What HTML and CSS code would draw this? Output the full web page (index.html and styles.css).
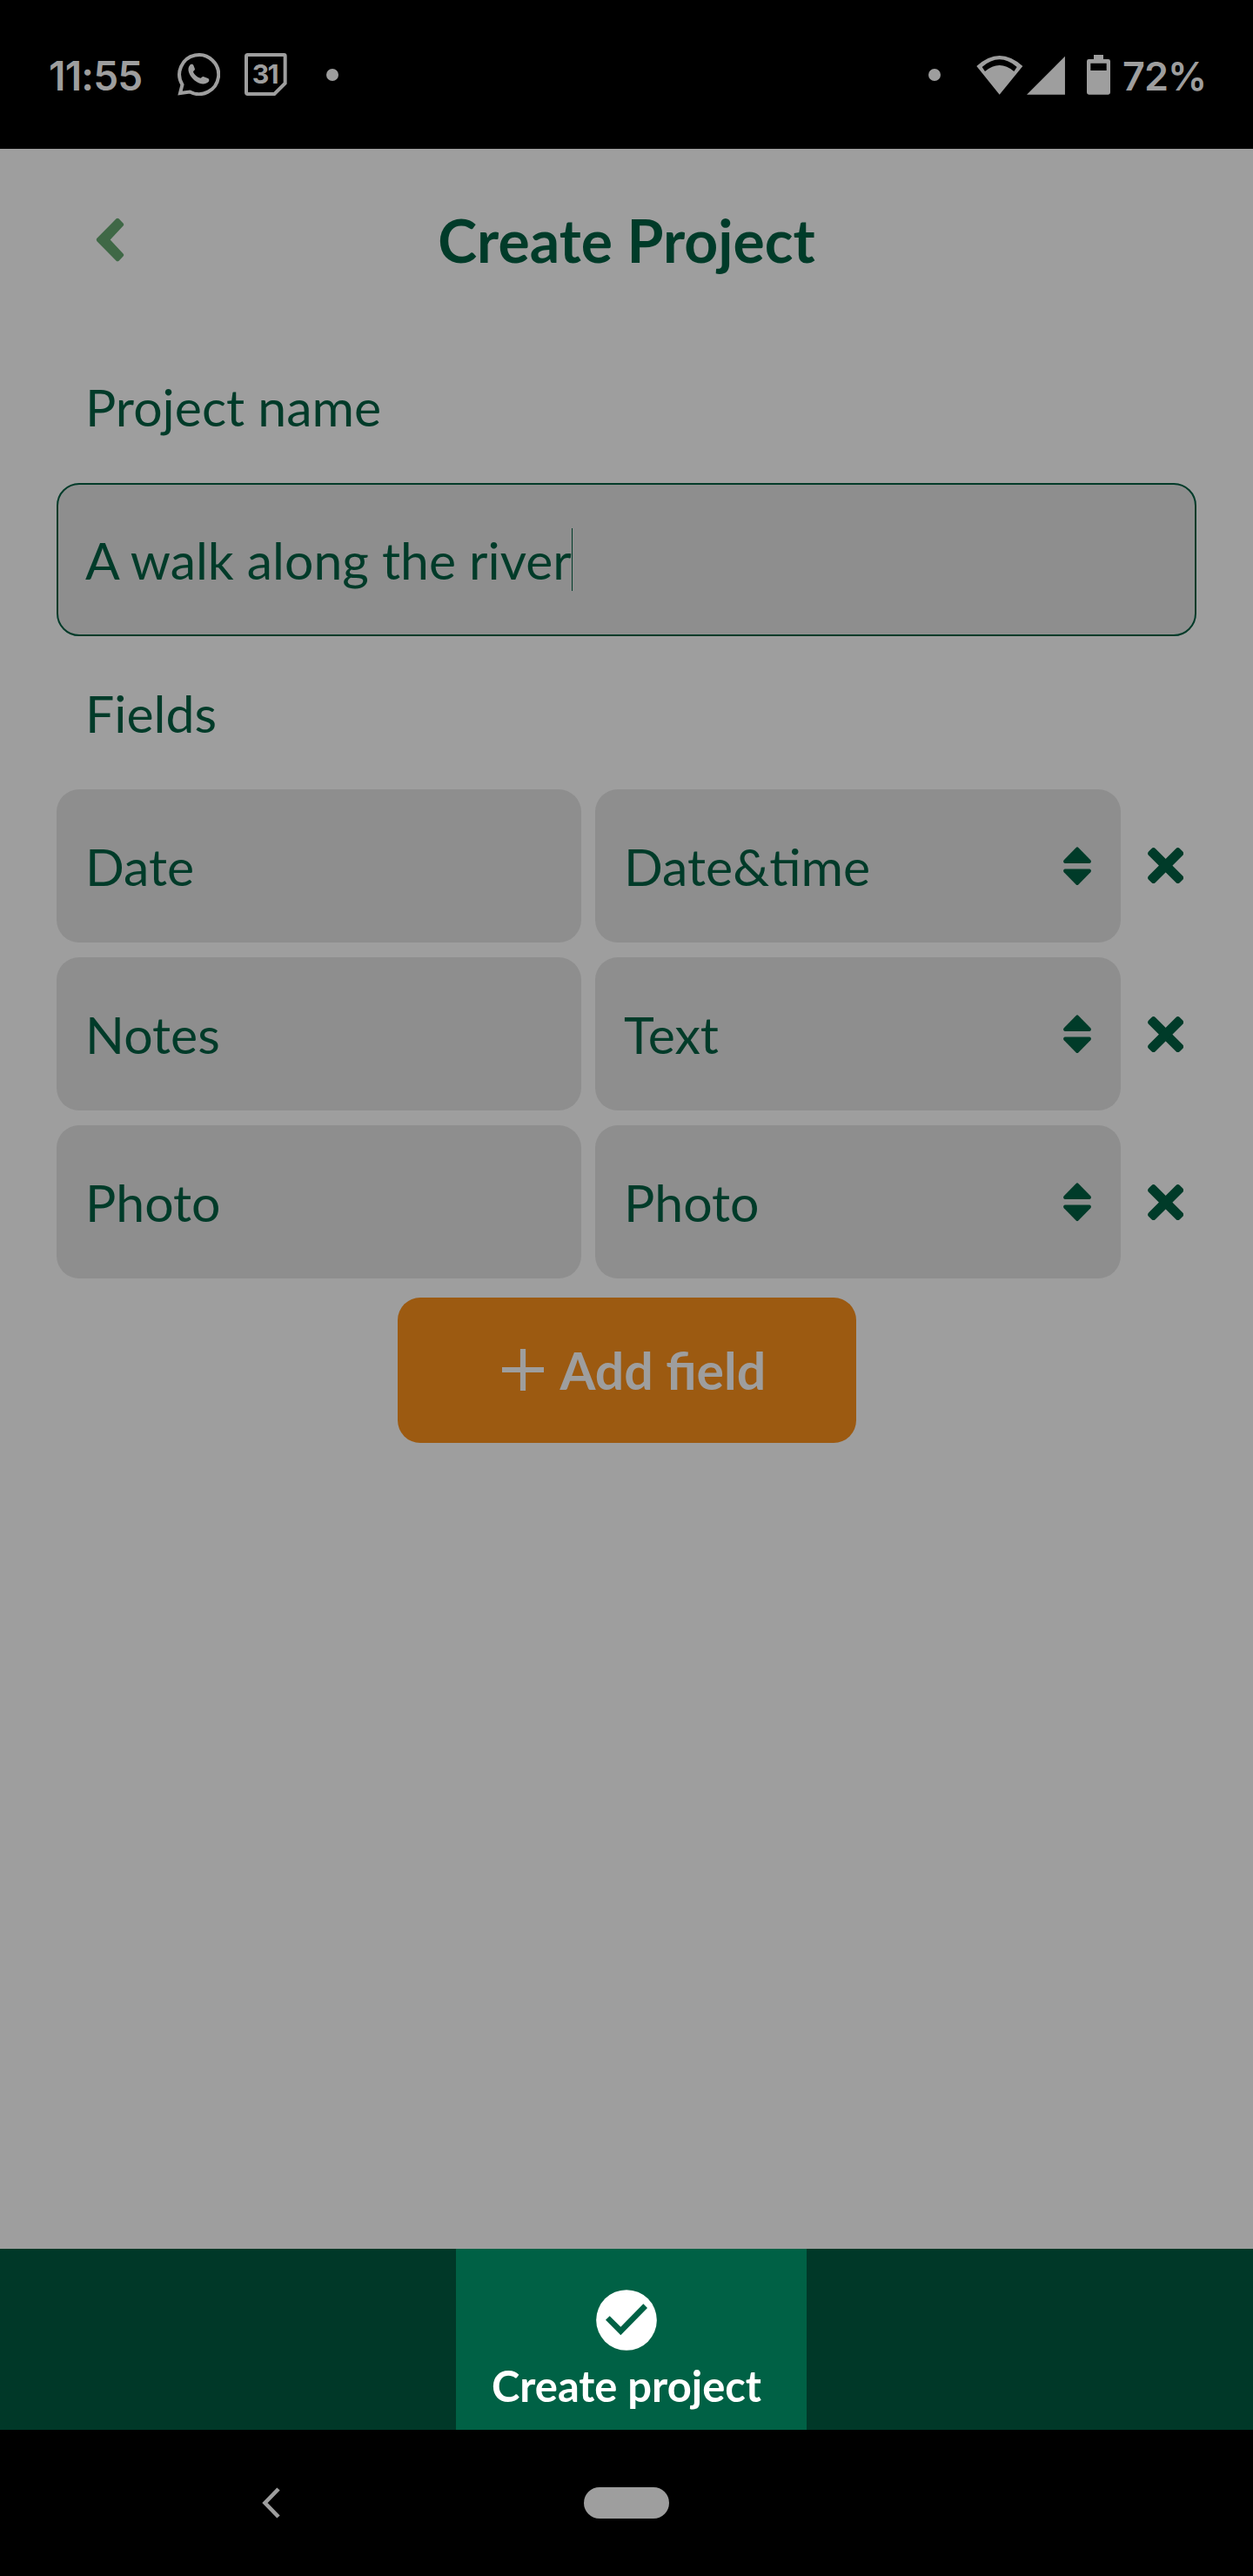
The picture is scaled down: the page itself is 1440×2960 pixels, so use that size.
FILE: index.html
```html
<!DOCTYPE html>
<html lang="en">
<head>
<meta charset="utf-8">
<title>Create Project</title>
<link rel="stylesheet" href="styles.css">
</head>
<body>
<svg class="defs" aria-hidden="true">
  <symbol id="sort" viewBox="0 0 96 134">
    <path d="M44 3Q48-1 52 3L94 46Q97 50 95 54Q93 57 90 57H6Q3 57 1 54Q-1 50 2 46Z"/>
    <path d="M44 131Q48 135 52 131L94 88Q97 84 95 80Q93 77 90 77H6Q3 77 1 80Q-1 84 2 88Z"/>
  </symbol>
  <symbol id="cross" viewBox="-62 -62 124 124">
    <rect x="-76" y="-16.5" width="152" height="33" rx="10" transform="rotate(45)"/>
    <rect x="-76" y="-16.5" width="152" height="33" rx="10" transform="rotate(-45)"/>
  </symbol>
</svg>
<div class="screen">
  <div class="status">
    <span class="time">11:55</span>
    <svg class="whatsapp" viewBox="27 33 147 147">
      <path d="M36 171L43.5 142A67.5 67.5 0 1 1 69.5 166.4Z" fill="none" stroke="currentColor" stroke-width="12"/>
      <path d="M70 74C72 71 80 70 82 75L87 88C88 92 81 95 81 98C85 107 95 116 106 119C109 119 113 113 116 114L132 120C137 122 137 128 134 132C126 140 114 141 103 137C86 131 71 115 66 99C63 89 64 80 70 74Z"/>
    </svg>
    <svg class="calendar" viewBox="259 33 147 147">
      <path d="M270 39H395Q399 39 399 43V137L362 174H270Q265 174 265 169V44Q265 39 270 39Z" fill="none" stroke="currentColor" stroke-width="12"/>
      <text x="285" y="137">31</text>
    </svg>
    <span class="dot"></span>
    <span class="dot dot-right"></span>
    <svg class="wifi" viewBox="242 66 162 138">
      <path fill-rule="evenodd" d="M243 105Q322 33 402 105L322 203ZM262 108L272 123Q322 81 372 123L382 108Q322 56 262 108Z"/>
    </svg>
    <svg class="signal" viewBox="416 66 133 138"><path d="M416 203H548V71Z"/></svg>
    <svg class="battery" viewBox="624 66 81 138">
      <path fill-rule="evenodd" d="M648 66H681V81H698Q705 81 705 88V196Q705 203 698 203H631Q624 203 624 196V88Q624 81 631 81H648ZM637 95V120H692V95Z"/>
    </svg>
    <span class="percent">72%</span>
  </div>

  <div class="header">
    <svg class="back" viewBox="45 43 99 154"><path d="M116 47Q120 43 125 47L140 63Q144 68 140 72L95 120L140 168Q144 173 140 177L125 193Q120 197 116 193L49 125Q45 120 49 115Z"/></svg>
    <h1>Create Project</h1>
  </div>

  <div class="form">
    <div class="label">Project name</div>
    <div class="box input"><span>A walk along the river</span><i class="caret"></i></div>
    <div class="label">Fields</div>
    <div class="rows">
      <div class="row">
        <div class="box">Date</div>
        <div class="box select">Date&amp;time<svg class="sort"><use href="#sort"/></svg></div>
        <svg class="cross"><use href="#cross"/></svg>
      </div>
      <div class="row">
        <div class="box">Notes</div>
        <div class="box select">Text<svg class="sort"><use href="#sort"/></svg></div>
        <svg class="cross"><use href="#cross"/></svg>
      </div>
      <div class="row">
        <div class="box">Photo</div>
        <div class="box select">Photo<svg class="sort"><use href="#sort"/></svg></div>
        <svg class="cross"><use href="#cross"/></svg>
      </div>
    </div>
    <div class="add">
      <svg class="plus" viewBox="0 0 48 48"><path d="M20.9 0H27.1V20.9H48V27.1H27.1V48H20.9V27.1H0V20.9H20.9Z"/></svg>
      <span>Add field</span>
    </div>
  </div>

  <div class="tabbar">
    <div class="tab">
      <svg class="check" viewBox="555 214 210 210">
        <circle cx="660" cy="319" r="104.5" fill="#fff"/>
        <path d="M588 318L602 305L640 342L718 263L732 277L640 371Z" fill="#006145"/>
      </svg>
      <span>Create project</span>
    </div>
  </div>

  <div class="nav">
    <svg class="nav-back" viewBox="0 0 22 36"><path d="M19 2L3.5 18L19 34" fill="none" stroke="currentColor" stroke-width="4.6"/></svg>
    <span class="home"></span>
  </div>
</div>
</body>
</html>
```
FILE: styles.css
```css
* { box-sizing: border-box; }
body { margin: 0; background: #000; }
svg { display: block; flex: none; fill: currentColor; }
.defs { display: none; }

.screen {
  width: 1440px;
  height: 2960px;
  display: flex;
  flex-direction: column;
  background: #9e9e9e;
  color: #003b29;
  font-family: Lato, sans-serif;
  font-size: 59px;
  overflow: hidden;
}

.status {
  height: 171px;
  flex: none;
  display: flex;
  align-items: center;
  background: #000;
  color: #9e9e9e;
  padding: 0 0 0 56px;
  font-family: Inter, sans-serif;
  font-weight: 600;
}
.time { width: 148px; font-size: 46px; letter-spacing: -0.8px; padding-top: 3px; }
.whatsapp { width: 49px; height: 49px; }
.calendar { width: 49px; height: 49px; margin-left: 28px; }
.calendar text { font-size: 91px; font-weight: 700; letter-spacing: -5px; }
.dot { width: 14px; height: 14px; border-radius: 50%; background: #9e9e9e; margin-left: 45px; }
.dot-right { margin-left: auto; }
.wifi { width: 54px; height: 46px; margin-left: 41px; }
.signal { width: 44.3px; height: 46px; margin-left: 4px; }
.battery { width: 27px; height: 46px; margin-left: 25px; }
.percent { width: 150px; margin-left: 14px; font-size: 45px; letter-spacing: -1px; padding-top: 3px; }

.header {
  height: 208px;
  flex: none;
  display: grid;
  grid-template-columns: 220px 1fr 220px;
  align-items: center;
}
.back { width: 33px; height: 51px; margin-left: 110px; color: #3f6846; }
h1 { margin: 0; font-size: 67.9px; font-weight: 700; text-align: center; }

.form { flex: 1; padding: 0 65px; }
.label { height: 176px; line-height: 177px; padding-left: 33px; }
.box {
  height: 176px;
  display: flex;
  align-items: center;
  padding-left: 33px;
  border-radius: 26px;
  background: #8e8e8e;
}
.input { width: 1310px; border: 2px solid #003b29; padding-left: 31px; font-size: 58.9px; }
.caret { width: 1px; height: 72px; background: #003b29; }
.rows { display: flex; flex-direction: column; gap: 17.2px; }
.row {
  display: grid;
  grid-template-columns: 603px 604px 41px;
  column-gap: 16px;
  align-items: center;
}
.select { justify-content: space-between; padding-right: 34px; }
.sort { width: 32px; height: 44.6px; }
.cross { width: 41.3px; height: 41.3px; margin-left: 14.5px; }
.add {
  width: 527px;
  height: 167px;
  margin: 21.6px auto 0;
  display: flex;
  align-items: center;
  gap: 18.5px;
  padding-left: 120.5px;
  border-radius: 26px;
  background: #9c5a11;
  color: #9e9e9e;
  font-weight: 700;
}
.plus { width: 48px; height: 48px; }

.tabbar { height: 208px; flex: none; background: #003828; }
.tab {
  width: 403px;
  height: 208px;
  margin-left: 524px;
  padding: 47px 11px 0 0;
  display: flex;
  flex-direction: column;
  align-items: center;
  gap: 10px;
  background: #006145;
  color: #fff;
  font-size: 48.9px;
  font-weight: 700;
  line-height: 60px;
}
.check { width: 70px; height: 70px; }

.nav {
  height: 168px;
  flex: none;
  display: flex;
  align-items: center;
  background: #000;
  color: #9e9e9e;
  padding-left: 300.5px;
}
.nav-back { width: 22px; height: 36px; }
.home { width: 98px; height: 36px; margin-left: 348.5px; border-radius: 18px; background: #9e9e9e; }
```
